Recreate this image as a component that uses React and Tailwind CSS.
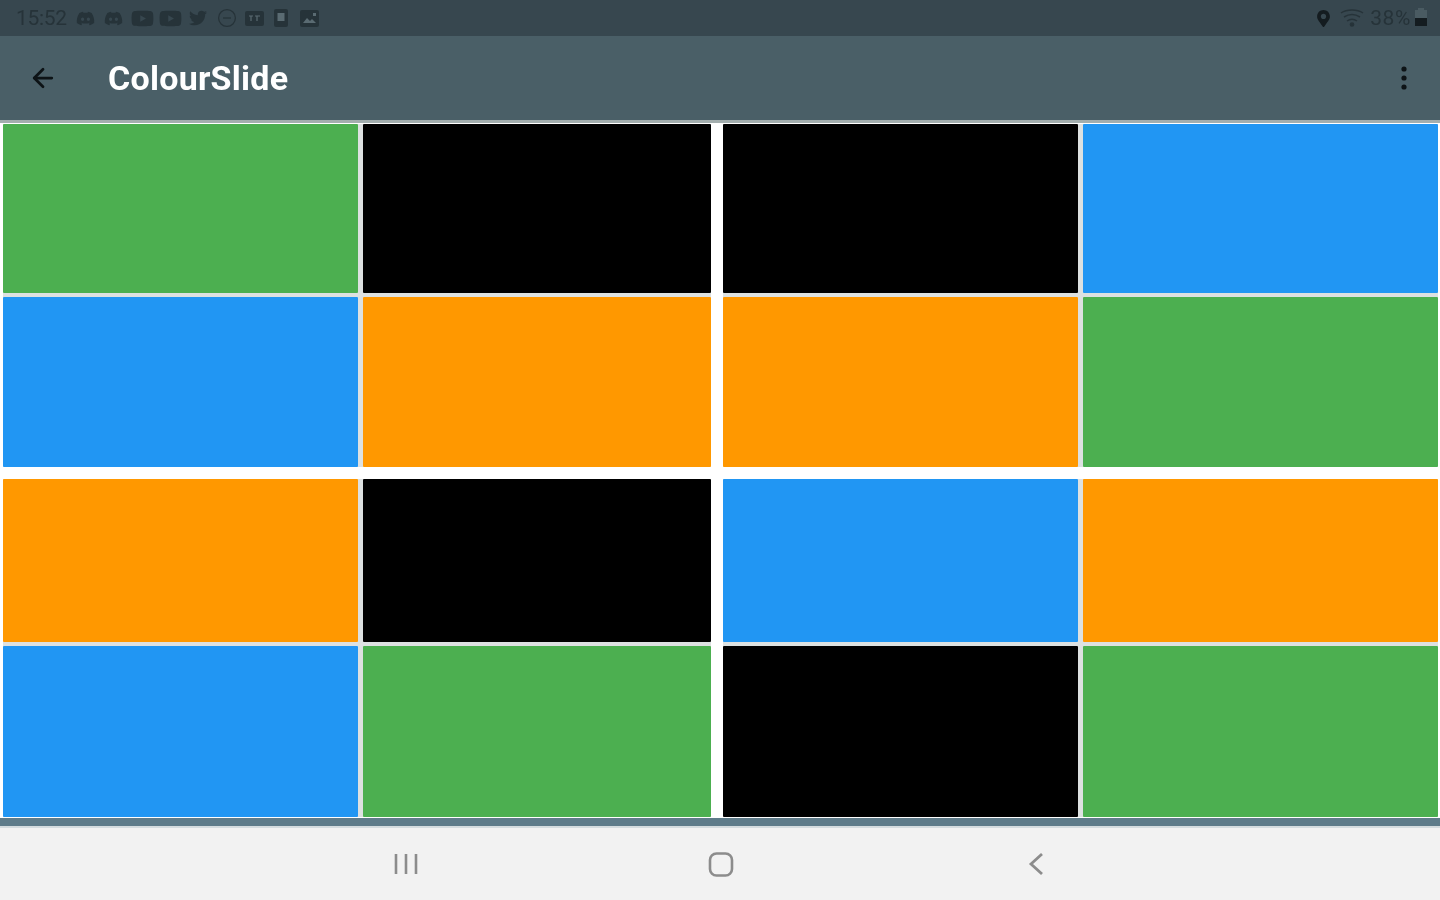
import React from "react";
import { ArrowLeft } from "lucide-react";
import { FaDiscord, FaYoutube, FaTwitter, FaMapMarkerAlt } from "react-icons/fa";

const B = "bg-[#2196f3]", G = "bg-[#4caf50]", O = "bg-[#ff9800]", K = "bg-black";

function Quad({ colors, rows, cols }) {
  return (
    <div className={`grid gap-x-[5px] gap-y-[4px] bg-[#dde1e1] ${cols} ${rows}`}>
      {colors.map((c, i) => <div key={i} className={`${c} rounded-[1px]`} />)}
    </div>
  );
}

const ic = "#263339";

function StatusIcons() {
  return (
    <div className="flex items-center ml-[9px]">
      <FaDiscord size={19} color={ic} />
      <FaDiscord size={19} color={ic} className="ml-[9px]" />
      <FaYoutube size={23} color={ic} className="ml-[8px]" />
      <FaYoutube size={23} color={ic} className="ml-[5px]" />
      <FaTwitter size={18} color={ic} className="ml-[7px]" />
      <svg className="ml-[10px]" width="20" height="20" viewBox="0 0 20 20" fill="none" stroke={ic} strokeWidth="1.3">
        <circle cx="10" cy="10" r="8.4" />
        <path d="M6 10h8" />
      </svg>
      <svg className="ml-[8px]" width="19" height="15" viewBox="0 0 19 15">
        <rect width="19" height="15" rx="2" fill={ic} />
        <path d="M4 5h4M6 5v5M10 5h5M12 5v5" stroke="#5a6b72" strokeWidth="1.2" />
      </svg>
      <svg className="ml-[10px]" width="14" height="18" viewBox="0 0 14 18">
        <rect width="14" height="18" rx="2" fill={ic} />
        <rect x="3.5" y="4" width="7" height="8" fill="#5a6b72" />
      </svg>
      <svg className="ml-[12px]" width="19" height="17" viewBox="0 0 19 17">
        <rect width="19" height="17" rx="2" fill={ic} />
        <path d="M3 13l4-5 3 3 2-2 4 4z" fill="#5a6b72" />
        <rect x="13" y="3" width="3" height="3" fill="#5a6b72" />
      </svg>
    </div>
  );
}

export default function App() {
  return (
    <div className="flex flex-col w-[1440px] h-[900px] overflow-hidden bg-white font-['Roboto',sans-serif] blur-[0.6px]">
      <div className="h-[36px] shrink-0 bg-[#37474f] flex items-center pl-[16px] pr-[12px]">
        <span className="text-[21px] leading-none text-[#263339] tracking-[-0.3px]">15:52</span>
        <StatusIcons />
        <div className="ml-auto flex items-center">
          <FaMapMarkerAlt size={17} color="#141c20" />
          <svg className="ml-[8px]" width="24" height="18" viewBox="0 0 24 18" fill="none" stroke="#263339" strokeWidth="1.5">
            <path d="M1 4c6-4 16-4 22 0M4 8c5-3 11-3 16 0M7 12c3-2 7-2 10 0" />
            <circle cx="12" cy="15.5" r="1.6" fill="#263339" />
          </svg>
          <span className="ml-[6px] text-[21px] leading-none text-[#263339] tracking-[0.6px]">38%</span>
          <svg className="ml-[3px]" width="14" height="20" viewBox="0 0 14 20">
            <rect x="4" y="0" width="6" height="3" fill="#4a5b62" />
            <rect x="1" y="2" width="12" height="8" fill="#4a5b62" />
            <rect x="1" y="10" width="12" height="8" fill="#141c20" />
          </svg>
        </div>
      </div>

      <div className="h-[87px] shrink-0 bg-[#4a5f67] flex items-center pl-[28px] pr-[33px] pb-[1px] border-b-[3px] border-[#a3aeae]">
        <ArrowLeft size={30} color="#0d1316" strokeWidth={2.2} />
        <span className="ml-[50px] text-[34px] leading-none font-bold text-white tracking-[0.25px]">ColourSlide</span>
        <svg className="ml-auto" width="6" height="26" viewBox="0 0 6 26" fill="#0d1316">
          <circle cx="3" cy="4" r="2.6" />
          <circle cx="3" cy="13" r="2.6" />
          <circle cx="3" cy="22" r="2.6" />
        </svg>
      </div>

      <div className="h-[695px] shrink-0 pl-[3px] pr-[2px] pt-[1px] flex gap-x-[12px] bg-white">
        <div className="flex flex-col gap-y-[12px] w-[708px]">
          <Quad cols="grid-cols-[355px_348px]" rows="grid-rows-[169px_170px]" colors={[G, K, B, O]} />
          <Quad cols="grid-cols-[355px_348px]" rows="grid-rows-[163px_171px]" colors={[O, K, B, G]} />
        </div>
        <div className="flex flex-col gap-y-[12px] w-[715px]">
          <Quad cols="grid-cols-[355px_355px]" rows="grid-rows-[169px_170px]" colors={[K, B, O, G]} />
          <Quad cols="grid-cols-[355px_355px]" rows="grid-rows-[163px_171px]" colors={[B, O, K, G]} />
        </div>
      </div>

      <div className="h-[10px] shrink-0 bg-[#5f7c8a] border-b-[2px] border-[#d5dcdf]" />

      <div className="flex-1 bg-[#f2f2f2] flex items-center justify-center pl-[2px]">
        <div className="w-[315px] flex justify-center">
          <svg width="24" height="22" viewBox="0 0 24 22" stroke="#8c8c8c" strokeWidth="2.6">
            <path d="M2 1v20M12 1v20M22 1v20" />
          </svg>
        </div>
        <div className="w-[315px] flex justify-center">
          <svg width="26" height="25" viewBox="0 0 26 25" fill="none" stroke="#8c8c8c" strokeWidth="2.6">
            <rect x="2" y="1.5" width="22" height="22" rx="6.5" />
          </svg>
        </div>
        <div className="w-[315px] flex justify-center">
          <svg width="16" height="24" viewBox="0 0 16 24" fill="none" stroke="#8c8c8c" strokeWidth="2.8">
            <path d="M14 2L3 12l11 10" />
          </svg>
        </div>
      </div>
    </div>
  );
}
